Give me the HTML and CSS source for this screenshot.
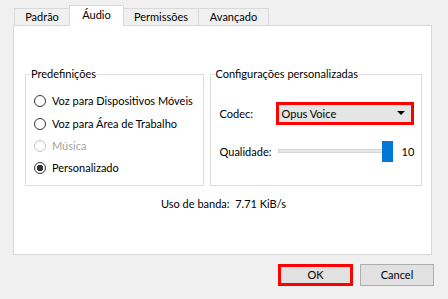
FILE: index.html
```html
<!DOCTYPE html>
<html lang="pt-BR">
<head>
  <meta charset="UTF-8">
  <title>Configurações de Áudio</title>
  <link rel="stylesheet" href="styles.css">
</head>
<body>
  <div class="dialog">
    <div class="tabs">
      <div class="tab tab-padrao">Padrão</div>
      <div class="tab tab-audio active">Áudio</div>
      <div class="tab tab-perm">Permissões</div>
      <div class="tab tab-avanc">Avançado</div>
    </div>

    <div class="panel">
      <div class="groups">
        <fieldset class="group presets">
          <legend>Predefinições</legend>
          <div class="group-body">
            <label class="radio"><span class="circle"></span>Voz para Dispositivos Móveis</label>
            <label class="radio"><span class="circle"></span>Voz para Área de Trabalho</label>
            <label class="radio disabled"><span class="circle"></span>Música</label>
            <label class="radio checked"><span class="circle"></span>Personalizado</label>
          </div>
        </fieldset>

        <fieldset class="group custom">
          <legend>Configurações personalizadas</legend>
          <div class="group-body">
            <div class="row">
              <span class="row-label">Codec:</span>
              <div class="combo">Opus Voice<span class="arrow"></span></div>
            </div>
            <div class="row row-slider">
              <span class="row-label">Qualidade:</span>
              <div class="slider">
                <div class="track"></div>
                <div class="thumb"></div>
              </div>
              <span class="value">10</span>
            </div>
          </div>
        </fieldset>
      </div>

      <p class="bandwidth">Uso de banda:&nbsp; 7.71 KiB/s</p>
    </div>

    <div class="buttons">
      <button class="btn marked">OK</button>
      <button class="btn">Cancel</button>
    </div>
  </div>
</body>
</html>
```

FILE: styles.css
```css
html, body {
  margin: 0;
  padding: 0;
}

body {
  width: 448px;
  height: 299px;
  background-color: #f0f0f0;
  font-family: Lato, "Noto Sans", sans-serif;
  font-size: 11px;
  line-height: 16px;
  color: #000;
  overflow: hidden;
  white-space: nowrap;
}

.dialog {
  padding: 5px 16px 0 13px;
}

/* abas */
.tabs {
  display: flex;
  align-items: flex-end;
  height: 20px;
  padding-left: 1px;
}

.tab {
  box-sizing: border-box;
  height: 17px;
  line-height: 15px;
  border: 1px solid #d9d9d9;
  border-bottom: none;
  margin-left: -1px;
  text-align: center;
  background-color: #f0f0f0;
}

.tab:first-child {
  margin-left: 0;
}

.tab-padrao { width: 56px; }
.tab-audio { width: 55px; }
.tab-perm { width: 76px; }
.tab-avanc { width: 71px; }

.tab.active {
  height: 21px;
  margin-bottom: -1px;
  line-height: 17px;
  background-color: #fff;
  position: relative;
  z-index: 1;
}

.panel {
  box-sizing: border-box;
  height: 230px;
  border: 1px solid #d9d9d9;
  background-color: #fff;
  padding: 40px 9px 0 11px;
}

.groups {
  display: flex;
  gap: 6px;
}

.group {
  box-sizing: border-box;
  margin: 0;
  padding: 0;
  min-width: 0;
  height: 120px;
  border: 1px solid #dcdcdc;
}

.group legend {
  margin-left: 4px;
  padding: 0 1px;
  line-height: 16px;
}

.presets { width: 179px; }
.custom { width: 213px; }

.presets .group-body {
  padding: 8px 0 0 8px;
}

.radio {
  display: flex;
  align-items: center;
  height: 22.4px;
}

.circle {
  box-sizing: border-box;
  flex: none;
  width: 12px;
  height: 12px;
  border: 1px solid #333;
  border-radius: 50%;
  background-color: #fff;
  margin-right: 6px;
}

.radio.checked .circle {
  background: radial-gradient(circle, #333 0 3px, #fff 3.6px);
}

.radio.disabled {
  color: #a3a3a3;
}

.radio.disabled .circle {
  border-color: #c4c4c4;
}

.custom .group-body {
  padding: 20px 0 0 9px;
}

.row {
  display: flex;
  align-items: center;
}

.row-label {
  flex: none;
  width: 56px;
}

.combo {
  box-sizing: border-box;
  position: relative;
  width: 138px;
  height: 23px;
  line-height: 17px;
  border: 3px solid #f00;
  background-color: #e5e5e5;
  padding-left: 3px;
}

.combo .arrow {
  position: absolute;
  right: 6px;
  top: 6px;
  border-left: 4px solid transparent;
  border-right: 4px solid transparent;
  border-top: 4px solid #000;
}

.row-slider {
  margin-top: 16px;
  height: 21px;
}

.slider {
  position: relative;
  width: 115px;
  height: 21px;
  margin-left: 2px;
}

.track {
  position: absolute;
  left: 0;
  right: 0;
  top: 8px;
  height: 4px;
  box-sizing: border-box;
  border: 1px solid #d6d6d6;
  background-color: #e7e7e7;
}

.thumb {
  position: absolute;
  right: 0;
  top: 0;
  width: 11px;
  height: 21px;
  background-color: #0078d7;
}

.value {
  margin-left: 9px;
}

.bandwidth {
  margin: 10px 0 0;
  text-align: center;
}

/* botões */
.buttons {
  display: flex;
  justify-content: flex-end;
  gap: 7px;
  margin: 9px -2px 0 0;
}

.btn {
  box-sizing: border-box;
  width: 74px;
  height: 22px;
  padding: 0;
  font: inherit;
  color: #000;
  border: 1px solid #adadad;
  background-color: #e1e1e1;
}

.btn.marked {
  width: 75px;
  border: 3px solid #f00;
}
```
